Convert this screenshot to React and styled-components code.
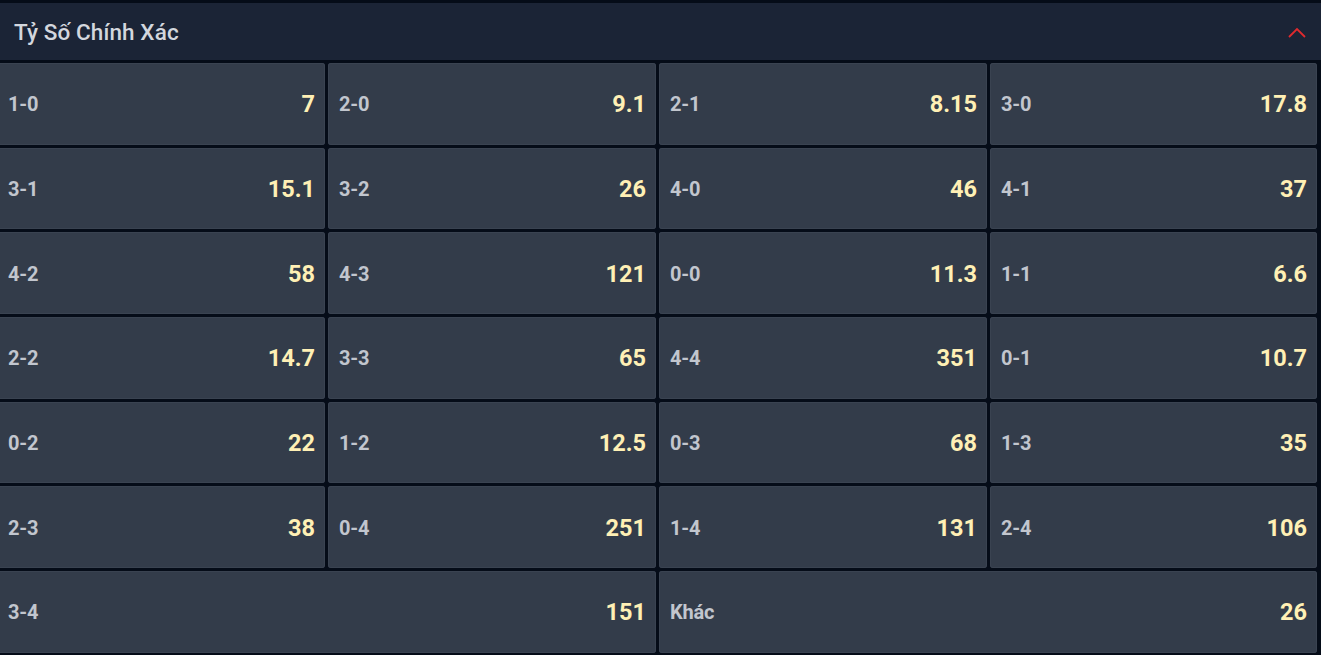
import React from "react";
import styled, { createGlobalStyle } from "styled-components";

const Global = createGlobalStyle`
  html, body { margin: 0; padding: 0; background: #050c18; }
  body { font-family: Roboto, "Liberation Sans", sans-serif; overflow: hidden; }
`;

const Panel = styled.div`
  width: 1321px;
  height: 655px;
  background: #050c18;
  padding-top: 3px;
  box-sizing: border-box;
  overflow: hidden;
`;

const Header = styled.div`
  height: 57px;
  background: #1b2436;
  display: flex;
  align-items: center;
  justify-content: space-between;
  padding: 0 14px 0 14px;
  box-sizing: border-box;
`;

const Title = styled.div`
  color: #d3d7de;
  font-size: 22.5px;
  font-weight: 500;
  letter-spacing: 0.1px;
`;

const Chevron = styled.svg`
  width: 20px;
  height: 12px;
  margin-right: 0;
  margin-top: 2px;
`;

const Grid = styled.div`
  margin-top: 3px;
  margin-left: -3px;
  display: grid;
  grid-template-columns: 328px 328px 328px 327px;
  grid-auto-rows: 81.67px;
  gap: 3px;
`;

const Cell = styled.div`
  grid-column: span ${(p) => p.$span || 1};
  background: #333c4a;
  border-radius: 3px;
  box-shadow: inset 0 0 0 1px #3a4351;
  display: flex;
  align-items: center;
  justify-content: space-between;
  padding: 1px 10px 0 11px;
  box-sizing: border-box;
`;

const Label = styled.span`
  color: #c2c6ce;
  font-size: 20px;
  font-weight: 700;
  letter-spacing: -0.2px;
`;

const Value = styled.span`
  color: #fff0b5;
  font-size: 23.5px;
  font-weight: 700;
`;

const data = [
  ["1-0", "7"], ["2-0", "9.1"], ["2-1", "8.15"], ["3-0", "17.8"],
  ["3-1", "15.1"], ["3-2", "26"], ["4-0", "46"], ["4-1", "37"],
  ["4-2", "58"], ["4-3", "121"], ["0-0", "11.3"], ["1-1", "6.6"],
  ["2-2", "14.7"], ["3-3", "65"], ["4-4", "351"], ["0-1", "10.7"],
  ["0-2", "22"], ["1-2", "12.5"], ["0-3", "68"], ["1-3", "35"],
  ["2-3", "38"], ["0-4", "251"], ["1-4", "131"], ["2-4", "106"],
  ["3-4", "151", 2], ["Khác", "26", 2],
];

export default function App() {
  return (
    <>
      <Global />
      <Panel>
        <Header>
          <Title>Tỷ Số Chính Xác</Title>
          <Chevron viewBox="0 0 20 12">
            <path d="M2 10 L10 2 L18 10" fill="none" stroke="#e02a2e" strokeWidth="1.8" />
          </Chevron>
        </Header>
        <Grid>
          {data.map(([l, v, s]) => (
            <Cell key={l} $span={s}>
              <Label>{l}</Label>
              <Value>{v}</Value>
            </Cell>
          ))}
        </Grid>
      </Panel>
    </>
  );
}
